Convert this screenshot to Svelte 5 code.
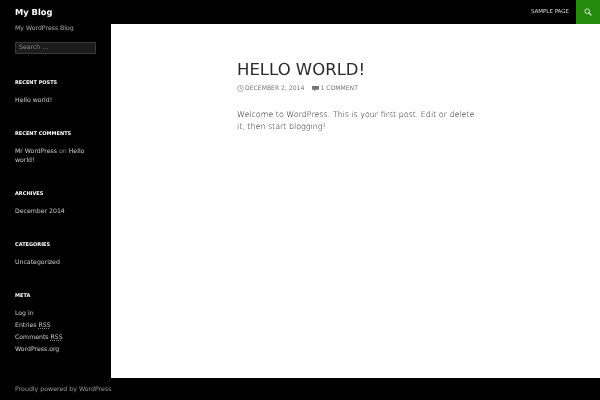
<script>
	const widgets = [
		{ title: 'Recent Posts', lines: ['Hello world!'] },
		{ title: 'Recent Comments', comment: true },
		{ title: 'Archives', lines: ['December 2014'] },
		{ title: 'Categories', lines: ['Uncategorized'] }
	];
</script>

<div class="page">
	<header class="masthead">
		<h1 class="site-title">My Blog</h1>
		<nav class="menu">
			<span class="menu-item">Sample Page</span>
			<div class="search-toggle">
				<svg width="8" height="8" viewBox="0 0 10 10" fill="none" stroke="#e6f3e3" aria-hidden="true">
					<circle cx="4" cy="4" r="2.9" stroke-width="1.1" />
					<path d="M6.1 6.1 9.2 9.2" stroke-width="1.6" />
				</svg>
			</div>
		</nav>
	</header>

	<div class="body">
		<aside class="sidebar">
			<p class="description">My WordPress Blog</p>
			<div class="search-field">Search …</div>

			{#each widgets as widget}
				<section class="widget">
					<h2 class="widget-title">{widget.title}</h2>
					{#if widget.comment}
						<p class="comment">Mr WordPress <span class="dim">on</span> Hello world!</p>
					{:else}
						{#each widget.lines as line}
							<p class="line">{line}</p>
						{/each}
					{/if}
				</section>
			{/each}

			<section class="widget">
				<h2 class="widget-title">Meta</h2>
				<ul class="meta">
					<li>Log in</li>
					<li>Entries <abbr>RSS</abbr></li>
					<li>Comments <abbr>RSS</abbr></li>
					<li>WordPress.org</li>
				</ul>
			</section>
		</aside>

		<main class="content">
			<article class="post">
				<h1 class="entry-title">Hello World!</h1>
				<div class="entry-meta">
					<span class="meta-item">
						<svg width="7" height="7" viewBox="0 0 8 8" fill="none" stroke="#888" aria-hidden="true">
							<circle cx="4" cy="4" r="3.3" stroke-width="0.8" />
							<path d="M4 2v2.2h1.6" stroke-width="0.8" />
						</svg>
						December 2, 2014
					</span>
					<span class="meta-item">
						<svg width="7" height="7" viewBox="0 0 8 8" fill="#767676" aria-hidden="true">
							<path d="M0 1h8v4.4H4.2L2.4 7V5.4H0z" />
						</svg>
						1 Comment
					</span>
				</div>
				<p class="entry-text">Welcome to WordPress. This is your first post. Edit or delete it, then start blogging!</p>
			</article>
		</main>
	</div>

	<footer class="site-footer">Proudly powered by WordPress</footer>
</div>

<style>
	:global(body) {
		margin: 0;
		background: #000;
	}

	.page {
		width: 600px;
		height: 400px;
		display: flex;
		flex-direction: column;
		overflow: hidden;
		background: #000;
		color: #fff;
		font-family: "DejaVu Sans", sans-serif;
		text-rendering: geometricPrecision;
		will-change: transform;
	}

	.masthead {
		height: 24px;
		flex: none;
		display: flex;
		justify-content: space-between;
		padding-left: 15px;
	}

	.site-title {
		margin: 0;
		font-size: 8.3px;
		font-weight: 700;
		line-height: 24px;
	}

	.menu {
		display: flex;
	}

	.menu-item {
		font-size: 5.5px;
		line-height: 24px;
		text-transform: uppercase;
		margin-right: 7px;
		color: #ddd;
	}

	.search-toggle {
		width: 24px;
		height: 24px;
		background: #24890d;
		display: flex;
		align-items: center;
		justify-content: center;
	}

	.body {
		height: 354px;
		flex: none;
		display: flex;
	}

	.sidebar {
		width: 111px;
		flex: none;
		box-sizing: border-box;
		padding: 0 15px;
		font-size: 6.2px;
	}

	.description {
		margin: 0;
		font-size: 6.2px;
		line-height: 9px;
		color: #aaa;
	}

	.search-field {
		margin-top: 9px;
		height: 12px;
		box-sizing: border-box;
		border: 1px solid #3a3a3a;
		background: #1c1c1c;
		color: #8a8a8a;
		font-size: 6.2px;
		line-height: 10px;
		padding-left: 3px;
	}

	.widget {
		margin-top: 25px;
	}

	.widget-title {
		margin: 0 0 8px;
		font-size: 5px;
		font-weight: 700;
		line-height: 9px;
		text-transform: uppercase;
	}

	.line,
	.comment {
		margin: 0;
		line-height: 9px;
		color: #ccc;
	}

	.dim {
		color: #8a8a8a;
	}

	.meta {
		margin: -1.5px 0 0;
		padding: 0;
		list-style: none;
		line-height: 12px;
		color: #ccc;
	}

	abbr {
		text-decoration: underline dotted #888;
	}

	.content {
		flex: 1;
		background: #fff;
	}

	.post {
		width: 240px;
		margin-left: 126px;
		padding-top: 37px;
		color: #2b2b2b;
	}

	.entry-title {
		margin: 0;
		font-size: 16.5px;
		font-weight: 400;
		line-height: 18px;
		text-transform: uppercase;
		color: #2b2b2b;
	}

	.entry-meta {
		display: flex;
		gap: 8px;
		margin-top: 6px;
		font-size: 6.1px;
		line-height: 8px;
		color: #767676;
		text-transform: uppercase;
	}

	.meta-item {
		display: flex;
		align-items: center;
		gap: 1px;
	}

	.meta-item svg {
		margin-top: -1px;
	}

	.entry-text {
		margin: 16px 0 0;
		font-size: 7.95px;
		font-weight: 300;
		line-height: 12px;
		color: #111;
	}

	.site-footer {
		flex: 1;
		padding-left: 15px;
		font-size: 6.25px;
		line-height: 23px;
		color: #999;
	}
</style>
